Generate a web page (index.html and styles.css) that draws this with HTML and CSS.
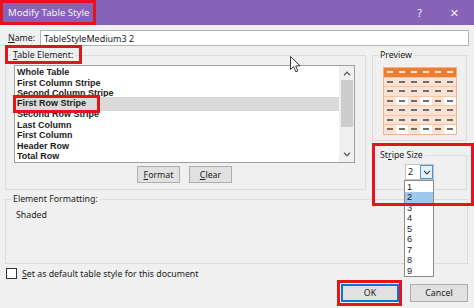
FILE: index.html
```html
<!DOCTYPE html>
<html lang="en">
<head>
    <meta charset="UTF-8">
    <title>Modify Table Style</title>
    <link rel="stylesheet" href="styles.css">
</head>
<body>
    <div class="titlebar">
        <span class="title">Modify Table Style</span>
        <span class="tb-help">?</span>
        <span class="tb-close">&#x2715;</span>
    </div>

    <div class="dialog">
        <div class="name-row">
            <span class="name-label"><u>N</u>ame:</span>
            <div class="textbox">TableStyleMedium3 2</div>
        </div>

        <div class="panes">
            <div class="group elements">
                <span class="group-title"><u>T</u>able Element:</span>
                <div class="listbox">
                    <ul class="items">
                        <li>Whole Table</li>
                        <li>First Column Stripe</li>
                        <li>Second Column Stripe</li>
                        <li class="selected">First Row Stripe</li>
                        <li>Second Row Stripe</li>
                        <li>Last Column</li>
                        <li>First Column</li>
                        <li>Header Row</li>
                        <li>Total Row</li>
                    </ul>
                    <div class="scrollbar">
                        <svg class="chev" width="8" height="5" viewBox="0 0 8 5"><path d="M1 4.2 L4 1.2 L7 4.2" fill="none" stroke="#606060" stroke-width="1.3"/></svg>
                        <span class="thumb"></span>
                        <svg class="chev down" width="8" height="5" viewBox="0 0 8 5"><path d="M1 0.8 L4 3.8 L7 0.8" fill="none" stroke="#606060" stroke-width="1.3"/></svg>
                    </div>
                </div>
                <div class="list-buttons">
                    <button class="btn"><u>F</u>ormat</button>
                    <button class="btn"><u>C</u>lear</button>
                </div>
            </div>

            <div class="side">
                <div class="group preview">
                    <span class="group-title">Preview</span>
                    <div class="mini-table">
                        <i class="head"></i><i class="head"></i><i class="head"></i><i class="head"></i><i class="head"></i><i class="head"></i>
                        <i></i><i></i><i></i><i></i><i></i><i></i>
                        <i></i><i></i><i></i><i></i><i></i><i></i>
                        <i></i><i class="light"></i><i></i><i class="light"></i><i></i><i class="light"></i>
                        <i></i><i></i><i></i><i></i><i></i><i></i>
                        <i></i><i></i><i></i><i></i><i></i><i></i>
                        <i></i><i class="light"></i><i></i><i class="light"></i><i></i><i class="light"></i>
                    </div>
                </div>
                <div class="group stripe">
                    <span class="group-title">St<u>r</u>ipe Size</span>
                    <div class="combo">
                        <span class="combo-value">2</span>
                        <span class="combo-btn">
                            <svg width="8" height="5" viewBox="0 0 8 5"><path d="M1 0.8 L4 3.8 L7 0.8" fill="none" stroke="#404040" stroke-width="1.2"/></svg>
                        </span>
                        <ul class="dropdown">
                            <li>1</li>
                            <li class="hot">2</li>
                            <li>3</li>
                            <li>4</li>
                            <li>5</li>
                            <li>6</li>
                            <li>7</li>
                            <li>8</li>
                            <li>9</li>
                        </ul>
                    </div>
                </div>
            </div>
        </div>

        <div class="group formatting">
            <span class="group-title">Element Formatting:</span>
            <div class="format-desc">Shaded</div>
        </div>

        <label class="check">
            <span class="box"></span>
            <span><u>S</u>et as default table style for this document</span>
        </label>

        <div class="actions">
            <button class="btn btn-default">OK</button>
            <button class="btn btn-cancel">Cancel</button>
        </div>
    </div>

    <!-- annotation boxes drawn over the screenshot -->
    <div class="mark mark-title"></div>
    <div class="mark mark-element"></div>
    <div class="mark mark-row"></div>
    <div class="mark mark-stripe"></div>
    <div class="mark mark-ok"></div>

    <svg class="cursor" width="11" height="17" viewBox="0 0 11 17">
        <path d="M0.5 0.5 L0.5 13.5 L3.6 10.6 L5.8 15.8 L7.8 15 L5.7 9.9 L10 9.9 Z" fill="#fff" stroke="#222" stroke-width="0.9" stroke-linejoin="round"/>
    </svg>
</body>
</html>
```

FILE: styles.css
```css
body {
    margin: 0;
    width: 474px;
    height: 308px;
    overflow: hidden;
    position: relative;
    background: #f0f0f0;
    font-family: "Noto Sans", "DejaVu Sans", sans-serif;
    font-size: 8.8px;
    color: #1a1a1a;
}

ul {
    list-style: none;
    margin: 0;
    padding: 0;
}

.titlebar {
    height: 25px;
    background: #8763b8;
    color: #f4f0fa;
    display: flex;
    align-items: center;
    padding-left: 8px;
}

.title {
    font-size: 9.6px;
    flex: 1;
}

.tb-help {
    font-size: 10px;
    margin-right: 28px;
}

.tb-close {
    font-size: 11px;
    margin-right: 15px;
}

.dialog {
    padding: 0 5px;
}

.name-row {
    display: flex;
    align-items: center;
    height: 16px;
    margin-top: 5px;
}

.name-label {
    width: 32px;
    padding-left: 3px;
}

.textbox {
    flex: 1;
    height: 16px;
    line-height: 16px;
    box-sizing: border-box;
    background: #fff;
    border: 1px solid #b4b4b4;
    padding-left: 3px;
    font-size: 9px;
}

.panes {
    display: grid;
    grid-template-columns: 361px 95px;
    column-gap: 6px;
    margin-top: 9px;
}

.group {
    border: 1px solid #dcdcdc;
    box-sizing: border-box;
}

.group-title {
    display: block;
    width: fit-content;
    margin-top: -7px;
    margin-left: 5px;
    padding: 0 2px;
    line-height: 12px;
    background: #f0f0f0;
}

.elements {
    height: 135px;
}

.listbox {
    display: flex;
    width: 341px;
    height: 98px;
    box-sizing: border-box;
    margin: 4px 0 0 8px;
    background: #fff;
    border: 1px solid #a0a0a0;
}

.items {
    flex: 1;
    padding-top: 1px;
    font-family: "Liberation Sans", Arial, sans-serif;
    font-weight: bold;
    font-size: 9px;
}

.items li {
    line-height: 10.5px;
    height: 10.5px;
    padding-left: 2px;
    white-space: nowrap;
}

.items li.selected {
    position: relative;
    margin: -1.5px 0;
    height: 13.5px;
    line-height: 13.5px;
    background: #dadada;
}

.scrollbar {
    width: 15px;
    background: #f0f0f0;
    display: flex;
    flex-direction: column;
    align-items: center;
}

.chev {
    margin-top: 5px;
}

.chev.down {
    margin-top: auto;
    margin-bottom: 5px;
}

.thumb {
    width: 12px;
    height: 47px;
    margin-top: 4px;
    background: #cdcdcd;
}

.list-buttons {
    display: flex;
    justify-content: center;
    gap: 9px;
    width: 341px;
    margin: 3px 0 0 8px;
}

.btn {
    height: 17px;
    width: 43px;
    padding: 0;
    box-sizing: border-box;
    background: #e1e1e1;
    border: 1px solid #adadad;
    font-family: inherit;
    font-size: 8.8px;
    color: #1a1a1a;
}

.side {
    display: flex;
    flex-direction: column;
}

.preview {
    height: 86px;
}

.mini-table {
    display: grid;
    grid-template-columns: repeat(6, 12px);
    grid-auto-rows: 8.5px;
    row-gap: 1px;
    width: fit-content;
    margin: 6px auto 0;
    border: 0.5px solid #f4b183;
    background: #f6c6a4;
}

.mini-table i {
    display: flex;
    align-items: center;
    justify-content: center;
    background: #fbe2d2;
}

.mini-table i::before {
    content: "";
    width: 6px;
    height: 1.6px;
    background: #6e6e6e;
}

.mini-table i.head {
    background: #ed7d31;
}

.mini-table i.head::before {
    background: #fde6d6;
}

.mini-table i.light {
    background: #fff;
}

.stripe {
    height: 35px;
    margin-top: 14px;
}

.combo {
    position: relative;
    display: flex;
    width: 29px;
    height: 16px;
    box-sizing: border-box;
    margin: 3px 0 0 32px;
    background: #fff;
    border: 1px solid #c4c4c4;
    font-size: 9px;
}

.combo-value {
    flex: 1;
    line-height: 14px;
    padding-left: 2px;
}

.combo-btn {
    width: 13px;
    box-sizing: border-box;
    border: 1px solid #4f95d6;
    background: #e5f1fb;
    display: flex;
    align-items: center;
    justify-content: center;
}

.dropdown {
    position: absolute;
    left: -2px;
    top: 15px;
    width: 30px;
    height: 97px;
    box-sizing: border-box;
    background: #fff;
    border: 1px solid #8a8a8a;
    padding-top: 0.5px;
    font-family: "Liberation Sans", Arial, sans-serif;
    font-size: 9.2px;
}

.dropdown li {
    height: 10.5px;
    line-height: 10.5px;
    padding-left: 2px;
}

.dropdown li.hot {
    background: #9ec8ec;
}

.formatting {
    height: 65px;
    margin: 9px 1px 0 0;
}

.format-desc {
    margin: 4px 0 0 10px;
    line-height: 12px;
}

.check {
    display: flex;
    align-items: center;
    gap: 5px;
    height: 13px;
    margin: 3px 0 0 1px;
}

.check .box {
    width: 11px;
    height: 11px;
    box-sizing: border-box;
    border: 1px solid #333;
    background: #fff;
}

.actions {
    display: flex;
    justify-content: flex-end;
    gap: 11px;
    margin: 4px 1px 0 0;
}

.btn-default,
.btn-cancel {
    height: 18px;
    width: 58px;
}

.btn-default {
    border: 1px solid #0078d7;
    box-shadow: inset 0 0 0 1px #0078d7;
}

.mark {
    position: absolute;
    border: 3px solid #e5141b;
    box-sizing: border-box;
}

.mark-title {
    left: 0;
    top: 0;
    width: 96px;
    height: 25px;
}

.mark-element {
    left: 5px;
    top: 45px;
    width: 77px;
    height: 19px;
}

.mark-row {
    left: 13px;
    top: 95px;
    width: 87px;
    height: 18px;
}

.mark-stripe {
    left: 372px;
    top: 143px;
    width: 102px;
    height: 63px;
}

.mark-ok {
    left: 337px;
    top: 280px;
    width: 65px;
    height: 26px;
}

.cursor {
    position: absolute;
    left: 290px;
    top: 56px;
}
```
